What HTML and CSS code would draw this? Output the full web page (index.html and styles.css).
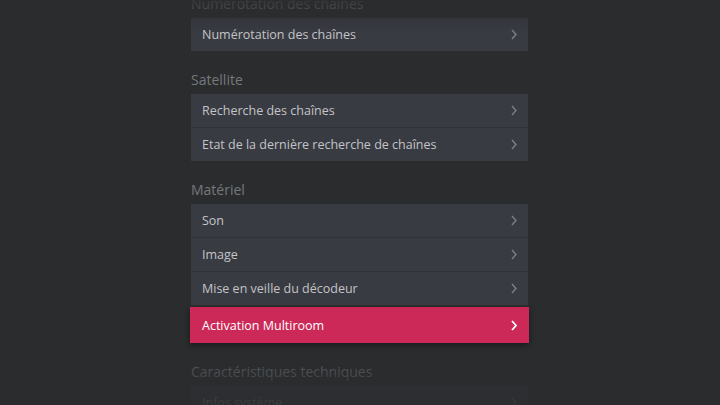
FILE: index.html
```html
<!DOCTYPE html>
<html lang="fr">
<head>
    <meta charset="UTF-8">
    <meta name="viewport" content="width=device-width, initial-scale=1.0">
    <title>Réglages</title>
    <link rel="stylesheet" href="styles.css">
</head>
<body>
    <div class="screen">
        <div class="settings">
            <div class="group">
                <div class="group-title">Numérotation des chaînes</div>
                <div class="row"><span>Numérotation des chaînes</span><svg class="chevron" viewBox="0 0 6 11"><path d="M1 1 L5 5.5 L1 10"/></svg></div>
            </div>
            <div class="group">
                <div class="group-title">Satellite</div>
                <div class="row"><span>Recherche des chaînes</span><svg class="chevron" viewBox="0 0 6 11"><path d="M1 1 L5 5.5 L1 10"/></svg></div>
                <div class="row"><span>Etat de la dernière recherche de chaînes</span><svg class="chevron" viewBox="0 0 6 11"><path d="M1 1 L5 5.5 L1 10"/></svg></div>
            </div>
            <div class="group">
                <div class="group-title">Matériel</div>
                <div class="row"><span>Son</span><svg class="chevron" viewBox="0 0 6 11"><path d="M1 1 L5 5.5 L1 10"/></svg></div>
                <div class="row"><span>Image</span><svg class="chevron" viewBox="0 0 6 11"><path d="M1 1 L5 5.5 L1 10"/></svg></div>
                <div class="row"><span>Mise en veille du décodeur</span><svg class="chevron" viewBox="0 0 6 11"><path d="M1 1 L5 5.5 L1 10"/></svg></div>
                <div class="row active"><span>Activation Multiroom</span><svg class="chevron" viewBox="0 0 6 11"><path d="M1 1 L5 5.5 L1 10"/></svg></div>
            </div>
            <div class="group">
                <div class="group-title">Caractéristiques techniques</div>
                <div class="row"><span>Infos système</span><svg class="chevron" viewBox="0 0 6 11"><path d="M1 1 L5 5.5 L1 10"/></svg></div>
                <div class="row"><span>Infos réseau</span><svg class="chevron" viewBox="0 0 6 11"><path d="M1 1 L5 5.5 L1 10"/></svg></div>
            </div>
        </div>
        <div class="fade fade-top"></div>
        <div class="fade fade-bottom"></div>
    </div>
</body>
</html>
```

FILE: styles.css
```css
html, body {
    margin: 0;
    padding: 0;
}

body {
    background-color: #2a2c2e;
    font-family: "Open Sans", "DejaVu Sans", sans-serif;
    overflow: hidden;
}

.screen {
    position: relative;
    width: 720px;
    height: 405px;
    overflow: hidden;
}

.settings {
    width: 337px;
    margin-left: 191px;
    margin-top: -6px;
}

.group + .group {
    margin-top: 19px;
}

.group-title {
    font-size: 14px;
    line-height: 20px;
    padding-bottom: 4px;
    color: #75787c;
}

.row {
    display: flex;
    align-items: center;
    justify-content: space-between;
    height: 33px;
    padding: 0 11px;
    background-color: #393b42;
    border-bottom: 1px solid #31333a;
    font-size: 12.5px;
    color: #c3c4c7;
}

.row:last-child {
    border-bottom: none;
}

.chevron {
    width: 6px;
    height: 11px;
    fill: none;
    stroke: #7d7f84;
    stroke-width: 1.4;
}

/* Selected item */
.row.active {
    height: 36px;
    margin: 1px -1px 0;
    padding: 0 12px;
    background-color: #cc2958;
    color: #ffffff;
    box-shadow: 0 2px 6px rgba(0, 0, 0, 0.45);
    position: relative;
}

.row.active .chevron {
    stroke: #ffffff;
    stroke-width: 1.8;
}

/* Dimming at the top and bottom of the list */
.fade {
    position: absolute;
    left: 0;
    right: 0;
    pointer-events: none;
}

.fade-top {
    top: 0;
    height: 32px;
    background: linear-gradient(to bottom, rgba(42, 44, 46, 0.85), rgba(42, 44, 46, 0));
}

.fade-bottom {
    bottom: 0;
    height: 58px;
    background: linear-gradient(to bottom, rgba(42, 44, 46, 0.1), rgba(42, 44, 46, 0.85) 70%, rgba(42, 44, 46, 0.9));
}
```
